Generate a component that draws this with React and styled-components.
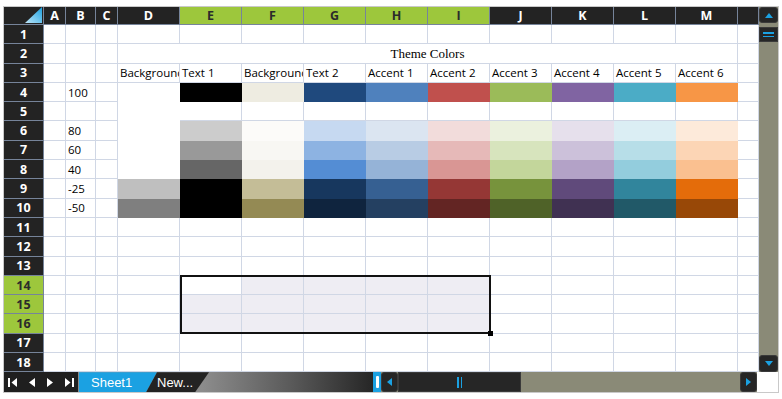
import React from 'react'
import styled, { createGlobalStyle } from 'styled-components'

const GlobalStyle = createGlobalStyle`
  html, body { margin: 0; padding: 0; background: #fff; }
  body { font-family: "Open Sans", "Noto Sans", sans-serif; }
`;

const COLS = ['A', 'B', 'C', 'D', 'E', 'F', 'G', 'H', 'I', 'J', 'K', 'L', 'M', '']
const ROWS = Array.from({ length: 18 }, (_, i) => i + 1)
const SEL_COLS = [4, 5, 6, 7, 8]
const SEL_ROWS = [14, 15, 16]
const GRID = '#d0d7e5'
const BLUE = '#1ba1e2'

const LABELS = ['Background', 'Text 1', 'Background', 'Text 2', 'Accent 1', 'Accent 2', 'Accent 3', 'Accent 4', 'Accent 5', 'Accent 6']
const VALUES = { 4: '100', 6: '80', 7: '60', 8: '40', 9: '-25', 10: '-50' }

// columns D..M, per row
const SHADES = {
  4: [null, '#000000', '#eeece1', '#1f497d', '#4f81bd', '#c0504d', '#9bbb59', '#8064a2', '#4bacc6', '#f79646'],
  6: [null, '#cccccc', '#fcfbf9', '#c6d9f1', '#dbe5f1', '#f2dcdb', '#ebf1de', '#e6e0ec', '#dbeef4', '#fdeada'],
  7: [null, '#999999', '#f8f7f3', '#8db3e2', '#b8cce4', '#e6b9b8', '#d7e4bd', '#ccc1da', '#b7dee8', '#fcd5b5'],
  8: [null, '#666666', '#f3f2ec', '#548dd4', '#95b3d7', '#d99694', '#c3d69b', '#b3a2c7', '#93cddd', '#fac090'],
  9: ['#bfbfbf', '#000000', '#c4bd97', '#17375e', '#366092', '#953735', '#77933c', '#604a7b', '#31859c', '#e46c0a'],
  10: ['#7f7f7f', '#000000', '#948a54', '#0f243e', '#244061', '#632523', '#4f6228', '#403152', '#215968', '#984807'],
}

const Frame = styled.div`
  margin: 6px 0 0 3px;
  width: 776px;
  box-sizing: border-box;
  border: 1px solid #c9c9c9;
  display: grid;
  grid-template-columns: 755px 19px;
  grid-template-rows: auto 20px;
  background: #fff;
`;

const Sheet = styled.div`
  position: relative;
  display: grid;
  grid-template-columns: 40px 22px 30px 22px repeat(10, 62px) 21px;
  grid-template-rows: 18px repeat(18, 19.3px);
  overflow: hidden;
`;

const Header = styled.div`
  grid-column: ${p => p.$col};
  grid-row: ${p => p.$row};
  box-sizing: border-box;
  background: ${p => (p.$active ? '#9dc73c' : '#232323')};
  color: ${p => (p.$active ? '#2b2b2b' : '#fff')};
  border-right: 1px solid #76849a;
  border-bottom: 1px solid #76849a;
  font: 700 12.5px "Open Sans", sans-serif;
  display: flex;
  align-items: center;
  justify-content: center;
  overflow: hidden;
`;

const Corner = styled(Header)`
  justify-content: flex-end;
  align-items: flex-end;
  padding: 0 1px 1px 0;
`;

const Cell = styled.div`
  grid-column: ${p => p.$col} / span ${p => p.$cspan || 1};
  grid-row: ${p => p.$row} / span ${p => p.$rspan || 1};
  box-sizing: border-box;
  background: ${p => p.$bg || '#fff'};
  border-right: 1px solid ${p => (p.$solid ? p.$bg : GRID)};
  border-bottom: 1px solid ${p => (p.$solid ? p.$bg : GRID)};
  padding: 0 2px;
  font: 11.5px "Open Sans", sans-serif;
  color: #000;
  white-space: nowrap;
  overflow: hidden;
  display: flex;
  align-items: center;
  justify-content: ${p => (p.$center ? 'center' : 'flex-start')};
`;

const Title = styled.span`
  font: 13px "Liberation Serif", serif;
  padding-top: 1px;
`;

const Selection = styled.div`
  position: absolute;
  left: 176px;
  top: 267.5px;
  width: 311px;
  height: 59px;
  box-sizing: border-box;
  border: 2px solid #111;
  pointer-events: none;
`;

const FillHandle = styled.div`
  position: absolute;
  right: -4px;
  bottom: -4px;
  width: 5px;
  height: 5px;
  background: #000;
`;

const VScroll = styled.div`
  grid-column: 2;
  grid-row: 1;
  display: flex;
  flex-direction: column;
  background: #8a8a77;
`;

const ScrollBtn = styled.div`
  flex: none;
  width: ${p => p.$w || 'auto'};
  height: ${p => p.$h || 'auto'};
  background: #262626;
  border: 1px solid #3a3a3a;
  box-sizing: border-box;
  border-radius: 3px;
  display: flex;
  align-items: center;
  justify-content: center;
`;

const VThumb = styled.div`
  flex: none;
  height: 15px;
  margin-top: 4px;
  background: #262626;
  border: 1px solid #3a3a3a;
  box-sizing: border-box;
  display: flex;
  flex-direction: column;
  align-items: center;
  justify-content: center;
  gap: 2px;
`;

const GripH = styled.div`
  width: 11px;
  height: 1.5px;
  background: ${BLUE};
`;

const Track = styled.div`
  flex: 1;
`;

const BottomBar = styled.div`
  grid-column: 1;
  grid-row: 2;
  display: flex;
  height: 20px;
`;

const Nav = styled.div`
  flex: none;
  width: 75px;
  box-sizing: border-box;
  background: #1f1f1f;
  border-right: 1px solid #8a8a8a;
  display: flex;
  align-items: center;
  gap: 12px;
  padding-left: 4px;
`;

const TabStrip = styled.div`
  flex: none;
  width: 294px;
  display: flex;
  background: linear-gradient(90deg, #a0a0a0 0%, #8c8c8c 42%, #5a5a5a 72%, #262626 100%);
  overflow: hidden;
`;

const Tab = styled.div`
  flex: none;
  box-sizing: border-box;
  width: ${p => p.$w}px;
  margin-left: ${p => p.$overlap || 0}px;
  padding-left: ${p => p.$pad}px;
  background: ${p => (p.$current ? BLUE : '#232323')};
  color: #fff;
  font: 13px "Liberation Sans", Arial, sans-serif;
  display: flex;
  align-items: center;
  clip-path: ${p =>
    p.$current
      ? 'polygon(0 0, 100% 0, calc(100% - 11px) 100%, 0 100%)'
      : 'polygon(11px 0, 100% 0, calc(100% - 14px) 100%, 0 100%)'};
`;

const Splitter = styled.div`
  flex: none;
  width: 8px;
  background: ${BLUE};
  display: flex;
  align-items: center;
  justify-content: center;
`;

const SplitterGrip = styled.div`
  width: 3px;
  height: 12px;
  background: #fff;
  border-radius: 1px;
`;

const HScroll = styled.div`
  flex: none;
  width: 376px;
  display: flex;
  background: #8a8a77;
`;

const HThumb = styled.div`
  flex: none;
  width: 123px;
  background: #262626;
  border: 1px solid #3a3a3a;
  box-sizing: border-box;
  display: flex;
  align-items: center;
  justify-content: center;
  gap: 2px;
`;

const GripV = styled.div`
  width: 1.5px;
  height: 11px;
  background: ${BLUE};
`;

const Tri = ({ dir }) => {
  const pts = {
    up: '0,5 4,0 8,5',
    down: '0,0 8,0 4,5',
    left: '5,0 5,8 0,4',
    right: '0,0 0,8 5,4',
  }[dir]
  const vertical = dir === 'up' || dir === 'down'
  return (
    <svg width={vertical ? 8 : 5} height={vertical ? 5 : 8} viewBox={vertical ? '0 0 8 5' : '0 0 5 8'}>
      <polygon points={pts} fill={BLUE} />
    </svg>
  )
}

const NavIcon = ({ kind }) => {
  if (kind === 'first')
    return (
      <svg width="9" height="9" viewBox="0 0 9 9">
        <rect x="0" y="0" width="2" height="9" fill="#fff" />
        <polygon points="9,0 9,9 3.5,4.5" fill="#fff" />
      </svg>
    )
  if (kind === 'last')
    return (
      <svg width="9" height="9" viewBox="0 0 9 9">
        <polygon points="0,0 0,9 5.5,4.5" fill="#fff" />
        <rect x="7" y="0" width="2" height="9" fill="#fff" />
      </svg>
    )
  return (
    <svg width="6" height="9" viewBox="0 0 6 9">
      <polygon points={kind === 'prev' ? '6,0 6,9 0,4.5' : '0,0 0,9 6,4.5'} fill="#fff" />
    </svg>
  )
}

const renderCell = (r, ci) => {
  const col = ci + 2
  const key = `${r}-${ci}`
  if (r === 2 && ci >= 4 && ci <= 12) return null
  if (ci === 3 && r >= 5 && r <= 8) return null

  if (r === 2 && ci === 3)
    return (
      <Cell key={key} $row={r + 1} $col={col} $cspan={10} $center>
        <Title>Theme Colors</Title>
      </Cell>
    )
  if (r === 4 && ci === 3)
    return <Cell key={key} $row={r + 1} $col={col} $rspan={5} $bg="#fff" $solid />

  if (r === 3 && ci >= 3 && ci <= 12)
    return (
      <Cell key={key} $row={r + 1} $col={col}>
        {LABELS[ci - 3]}
      </Cell>
    )
  if (ci === 1 && VALUES[r])
    return (
      <Cell key={key} $row={r + 1} $col={col}>
        {VALUES[r]}
      </Cell>
    )
  const shade = SHADES[r] && ci >= 3 && ci <= 12 ? SHADES[r][ci - 3] : null
  if (shade) return <Cell key={key} $row={r + 1} $col={col} $bg={shade} $solid />

  const selected = SEL_ROWS.includes(r) && SEL_COLS.includes(ci) && !(r === 14 && ci === 4)
  return <Cell key={key} $row={r + 1} $col={col} $bg={selected ? '#eeedf3' : '#fff'} />
}

const App = () => {
  return (
    <>
      <GlobalStyle />
      <Frame>
        <Sheet>
          <Corner $row={1} $col={1}>
            <svg width="17" height="16" viewBox="0 0 17 16">
              <defs>
                <linearGradient id="cornerTri" x1="0" y1="1" x2="1" y2="0">
                  <stop offset="0" stopColor="#bfe6f8" />
                  <stop offset="1" stopColor="#1aa0e0" />
                </linearGradient>
              </defs>
              <polygon points="0,16 17,0 17,16" fill="url(#cornerTri)" />
            </svg>
          </Corner>
          {COLS.map((c, ci) => (
            <Header key={`h${ci}`} $row={1} $col={ci + 2} $active={SEL_COLS.includes(ci)}>
              {c}
            </Header>
          ))}
          {ROWS.map(r => (
            <React.Fragment key={`r${r}`}>
              <Header $row={r + 1} $col={1} $active={SEL_ROWS.includes(r)}>
                {r}
              </Header>
              {COLS.map((_, ci) => renderCell(r, ci))}
            </React.Fragment>
          ))}
          <Selection>
            <FillHandle />
          </Selection>
        </Sheet>

        <VScroll>
          <ScrollBtn $h="16px">
            <Tri dir="up" />
          </ScrollBtn>
          <VThumb>
            <GripH />
            <GripH />
          </VThumb>
          <Track />
          <ScrollBtn $h="17px">
            <Tri dir="down" />
          </ScrollBtn>
        </VScroll>

        <BottomBar>
          <Nav>
            <NavIcon kind="first" />
            <NavIcon kind="prev" />
            <NavIcon kind="next" />
            <NavIcon kind="last" />
          </Nav>
          <TabStrip>
            <Tab $current $w={78} $pad={12}>Sheet1</Tab>
            <Tab $w={63} $overlap={-11} $pad={11}>New...</Tab>
          </TabStrip>
          <Splitter>
            <SplitterGrip />
          </Splitter>
          <HScroll>
            <ScrollBtn $w="17px">
              <Tri dir="left" />
            </ScrollBtn>
            <HThumb>
              <GripV />
              <GripV />
            </HThumb>
            <Track />
            <ScrollBtn $w="17px">
              <Tri dir="right" />
            </ScrollBtn>
          </HScroll>
        </BottomBar>
      </Frame>
    </>
  )
}

export default App
